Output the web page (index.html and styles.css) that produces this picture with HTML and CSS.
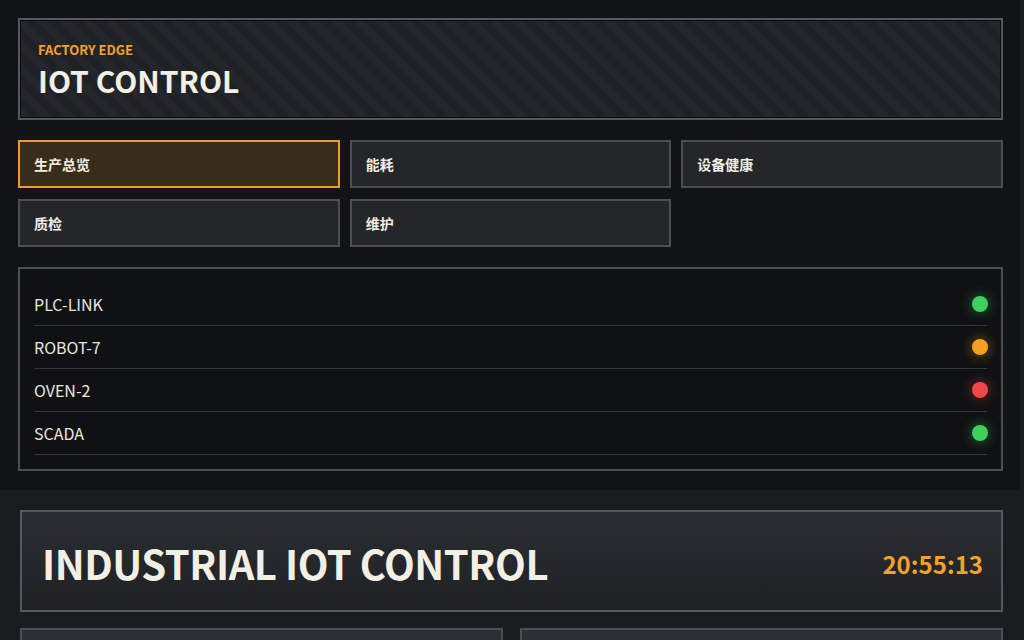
FILE: index.html
```html
<!DOCTYPE html>
<html lang="zh-CN">
<head>
<meta charset="utf-8">
<title>Industrial IoT Control</title>
<link rel="stylesheet" href="styles.css">
</head>
<body>
<div class="app">
  <aside class="side">
    <header class="brand">
      <div class="brand-kicker">FACTORY EDGE</div>
      <div class="brand-title">IOT CONTROL</div>
    </header>
    <nav class="nav">
      <button class="nav-btn active">生产总览</button>
      <button class="nav-btn">能耗</button>
      <button class="nav-btn">设备健康</button>
      <button class="nav-btn">质检</button>
      <button class="nav-btn">维护</button>
    </nav>
    <section class="status">
      <div class="status-row"><span>PLC-LINK</span><i class="dot ok"></i></div>
      <div class="status-row"><span>ROBOT-7</span><i class="dot warn"></i></div>
      <div class="status-row"><span>OVEN-2</span><i class="dot err"></i></div>
      <div class="status-row"><span>SCADA</span><i class="dot ok"></i></div>
    </section>
  </aside>
  <main class="main">
    <header class="topbar">
      <h1 class="title">INDUSTRIAL IOT CONTROL</h1>
      <div class="clock">20:55:13</div>
    </header>
    <div class="cards">
      <section class="card"></section>
      <section class="card"></section>
    </div>
  </main>
</div>
</body>
</html>
```
FILE: styles.css
```css
* { box-sizing: border-box; }
html, body { margin: 0; padding: 0; }
body {
  background: #1a1c1f;
  font-family: "Noto Sans CJK SC", "Noto Sans", sans-serif;
  color: #f2ede2;
}
.app { display: flex; flex-direction: column; }
.side {
  background: #111315;
  margin-right: 4px;
  padding: 18px 17px 19px 18px;
  display: flex;
  flex-direction: column;
  gap: 20px;
}
.brand {
  border: 2px solid #54585d;
  box-shadow: inset 0 0 0 1px #0b0c0e;
  background: repeating-linear-gradient(45deg, #23272b 0 8px, #1e2125 8px 16px);
  padding: 22px 18px 20px;
}
.brand-kicker {
  font-size: 13px;
  line-height: 16px;
  font-weight: 700;
  color: #f3a12c;
}
.brand-title {
  margin-top: 4px;
  font-size: 30px;
  line-height: 36px;
  font-weight: 700;
  letter-spacing: 0;
  color: #f4efe4;
}
.nav {
  display: grid;
  grid-template-columns: repeat(3, 1fr);
  gap: 11px 10px;
}
.nav-btn {
  height: 48px;
  border: 2px solid #4b4f54;
  background: #24272a;
  color: #f2ede2;
  font-family: inherit;
  font-size: 14px;
  font-weight: 700;
  text-align: left;
  padding: 0 14px;
}
.nav-btn.active {
  border-color: #f19a2b;
  background: #3a2c1a;
}
.status {
  border: 2px solid #4b4f54;
  background: #0f1113;
  padding: 14px 14px 14px;
}
.status-row {
  height: 43px;
  border-bottom: 1px solid #34373b;
  display: flex;
  align-items: center;
  justify-content: space-between;
  font-size: 16px;
  color: #ebe6dc;
}
.dot {
  width: 16px;
  height: 16px;
  border-radius: 50%;
  margin-right: -1px;
}
.dot.ok { background: #3fcf5c; box-shadow: 0 0 12px 2px rgba(63, 207, 92, 0.35); }
.dot.warn { background: #f5a020; box-shadow: 0 0 12px 2px rgba(245, 160, 32, 0.35); }
.dot.err { background: #f24747; box-shadow: 0 0 12px 2px rgba(242, 71, 71, 0.35); }
.main {
  padding: 20px 21px 20px 20px;
  display: flex;
  flex-direction: column;
  gap: 16px;
}
.topbar {
  border: 2px solid #55595d;
  background: linear-gradient(180deg, #2a2d31, #1f2225);
  padding: 25px 18px 20px 20px;
  display: flex;
  align-items: center;
  justify-content: space-between;
}
.title {
  margin: 0;
  font-size: 40px;
  line-height: 53px;
  font-weight: 700;
  letter-spacing: -0.5px;
  color: #f4efe4;
}
.clock {
  font-size: 24px;
  font-weight: 700;
  color: #f3a12c;
}
.cards {
  display: grid;
  grid-template-columns: 1fr 1fr;
  gap: 17px;
}
.card {
  border: 2px solid #4b4f54;
  background: linear-gradient(180deg, #2c2f33, #222528);
  height: 200px;
  padding: 14px;
}
```
